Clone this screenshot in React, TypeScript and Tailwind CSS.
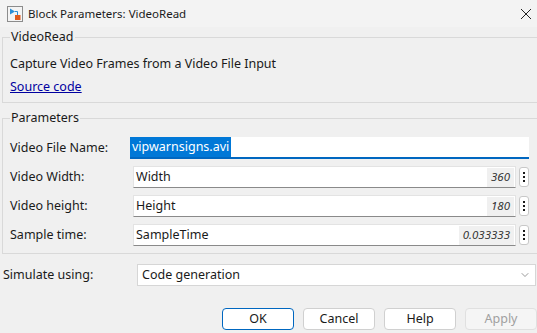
import React from "react";
import { ChevronDown } from "lucide-react";

const font = { fontFamily: '"Noto Sans", "Open Sans", sans-serif' };

const BlockIcon: React.FC = () => (
  <svg width="16" height="16" viewBox="0 0 16 16">
    <rect x="0.5" y="0.5" width="15" height="15" fill="#f4f4f4" stroke="#8c8c8c" />
    <path d="M3 2.5 L8 5.5 L3 8.5 Z" fill="#2a8fd6" />
    <path d="M8 5.5 H10.5 V9" stroke="#2a8fd6" fill="none" />
    <rect x="8" y="9" width="5.5" height="5" fill="#e05a1c" />
  </svg>
);

const MoreButton: React.FC = () => (
  <div className="ml-[3px] flex h-[20px] w-[10px] flex-col items-center justify-center gap-[2px] rounded-[3px] border border-[#c8c8c8] bg-white">
    <span className="h-[2px] w-[2px] bg-[#1a1a1a]" />
    <span className="h-[2px] w-[2px] bg-[#1a1a1a]" />
    <span className="h-[2px] w-[2px] bg-[#1a1a1a]" />
  </div>
);

const ParamRow: React.FC<{ label: string; text: string; value: string }> = ({
  label,
  text,
  value,
}) => (
  <div className="flex h-[22px] items-center">
    <div className="w-[123px] shrink-0 text-[12.5px] text-[#1a1a1a]">{label}</div>
    <div className="flex h-[22px] flex-1 items-center border border-[#e3e3e3] border-b-[#8a8a8a] bg-white pl-[2px] pr-[1px]">
      <span className="flex-1 text-[12.5px] text-[#1a1a1a]">{text}</span>
      <span className="flex h-[19px] items-center bg-[#f0f0f0] px-[4px] text-[11.5px] italic text-[#333]">
        {value}
      </span>
    </div>
    <MoreButton />
  </div>
);

const Button: React.FC<{ label: string; primary?: boolean; disabled?: boolean }> = ({
  label,
  primary,
  disabled,
}) => (
  <div
    className={
      "flex h-[22px] w-[72px] items-center justify-center rounded-[4px] border text-[12.5px] " +
      (primary
        ? "border-[#0067c0] bg-white text-[#1a1a1a]"
        : disabled
        ? "border-[#e0e0e0] bg-[#f5f5f5] text-[#a0a0a0]"
        : "border-[#d0d0d0] bg-white text-[#1a1a1a]")
    }
  >
    {label}
  </div>
);

const App: React.FC = () => {
  return (
    <div className="h-[333px] w-[537px] overflow-hidden bg-[#f0f0f0] leading-4" style={font}>
      <div className="flex h-[27px] items-center bg-[#f3f3f3] pl-[7px] pr-[5px]">
        <BlockIcon />
        <span className="ml-[5px] flex-1 text-[11.5px] text-[#1a1a1a]">
          Block Parameters: VideoRead
        </span>
        <svg width="12" height="12" viewBox="0 0 12 12">
          <path d="M1 1 L11 11 M11 1 L1 11" stroke="#222" strokeWidth="1" />
        </svg>
      </div>

      <fieldset className="ml-[2px] mt-[2px] border border-r-0 border-[#d9d9d9] pb-[7px] pl-[7px]">
        <legend className="px-[1px] text-[12.5px] text-[#1a1a1a]">VideoRead</legend>
        <div className="mt-[11px] text-[12.5px] text-[#1a1a1a]">
          Capture Video Frames from a Video File Input
        </div>
        <a className="mt-[7px] block w-fit text-[12.5px] text-[#0000a0] underline">Source code</a>
      </fieldset>

      <fieldset className="ml-[2px] mt-[7px] border border-r-0 border-[#d9d9d9] pb-[7px] pl-[7px] pr-[8px]">
        <legend className="px-[1px] text-[12.5px] text-[#1a1a1a]">Parameters</legend>
        <div className="mt-[11px] flex flex-col gap-[7px]">
          <div className="flex h-[22px] items-center">
            <div className="w-[120px] shrink-0 text-[12.5px] text-[#1a1a1a]">Video File Name:</div>
            <div className="flex h-[22px] flex-1 items-stretch border-b-2 border-[#0067c0] bg-white">
              <span className="flex items-center bg-[#0078d7] px-[2px] text-[12.5px] text-white">
                vipwarnsigns.avi
              </span>
            </div>
          </div>
          <ParamRow label="Video Width:" text="Width" value="360" />
          <ParamRow label="Video height:" text="Height" value="180" />
          <ParamRow label="Sample time:" text="SampleTime" value="0.033333" />
        </div>
      </fieldset>

      <div className="mt-[10px] flex h-[22px] items-center pl-[3px] pr-[1px]">
        <div className="w-[134px] shrink-0 text-[12.5px] text-[#1a1a1a]">Simulate using:</div>
        <div className="flex h-[22px] flex-1 items-center border border-[#d6d6d6] bg-white pl-[4px] pr-[4px]">
          <span className="flex-1 text-[12.5px] text-[#1a1a1a]">Code generation</span>
          <ChevronDown size={12} strokeWidth={1.2} color="#555" />
        </div>
      </div>

      <div className="mt-[22px] flex justify-end gap-[9px]">
        <Button label="OK" primary />
        <Button label="Cancel" />
        <Button label="Help" />
        <Button label="Apply" disabled />
      </div>
    </div>
  );
};

export default App;
